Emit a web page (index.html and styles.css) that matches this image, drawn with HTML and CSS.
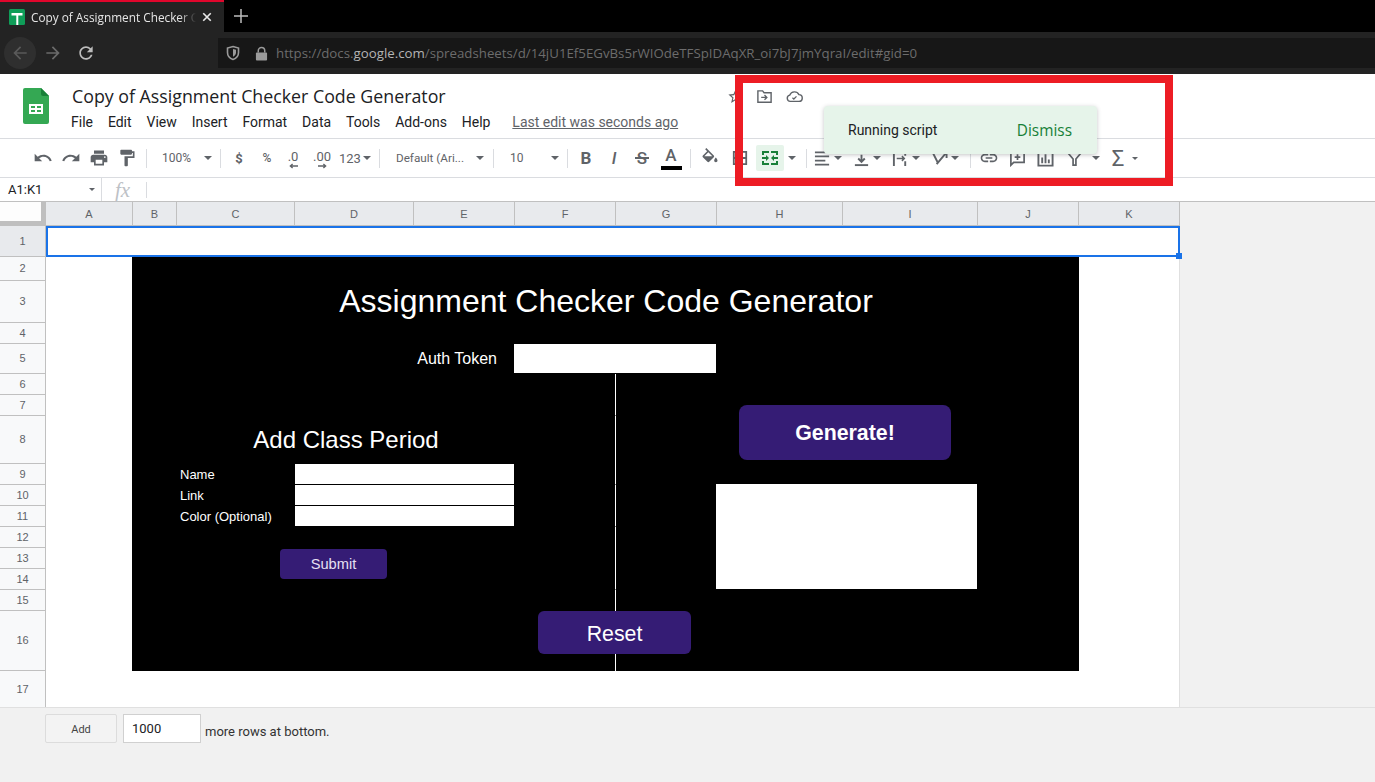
FILE: index.html
```html
<!DOCTYPE html>
<html><head><title>Copy of Assignment Checker Code Generator</title><meta charset="utf-8">
<link rel="stylesheet" href="styles.css">
</head>
<body>
<div class="page">
    <!-- browser -->
    <div class="tabbar">
        <div class="tab">
            <svg class="favicon" viewBox="0 0 16 16"><rect width="16" height="16" rx="1.500" fill="#0f9d58"/><path d="M2.500 4h11v2.500H9.300V16H7.300V6.500H2.500z" fill="#fff"/></svg>
            <span class="tab-title">Copy of Assignment Checker C</span>
            <svg class="tab-close" viewBox="0 0 12 12"><path d="M1.500 1.500l9 9M10.500 1.500l-9 9" stroke="#e8e8e8" stroke-width="2"/></svg>
        </div>
        <svg class="tab-new" viewBox="0 0 14 14"><path d="M7 0v14M0 7h14" stroke="#bdbdbd" stroke-width="1.500"/></svg>
    </div>
    <div class="navbar">
        <div class="nav-back"><svg viewBox="0 0 24 24"><path fill="#5a5a5a" d="M20 11H7.830l5.590-5.590L12 4l-8 8 8 8 1.410-1.410L7.830 13H20v-2z"/></svg></div>
        <svg class="nav-icon" viewBox="0 0 24 24"><path fill="#6b6b6b" d="M12 4l-1.410 1.410L16.170 11H4v2h12.170l-5.580 5.590L12 20l8-8z"/></svg>
        <svg class="nav-icon" viewBox="0 0 24 24"><path fill="#bdbdbd" d="M17.650 6.350C16.200 4.900 14.210 4 12 4c-4.420 0-7.990 3.580-7.990 8s3.570 8 7.990 8c3.730 0 6.840-2.550 7.730-6h-2.080c-.82 2.330-3.040 4-5.650 4-3.310 0-6-2.690-6-6s2.690-6 6-6c1.660 0 3.140.69 4.220 1.780L13 11h7V4l-2.350 2.350z"/></svg>
        <div class="urlbar">
            <svg class="shield" viewBox="0 0 16 16"><path d="M8 1.500l5.500 1.500v4.500c0 3.500-2.500 6-5.500 7-3-1-5.500-3.500-5.500-7V3z" fill="none" stroke="#9a9a9a" stroke-width="1.600"/><path d="M8 4l3 .8v3c0 1.800-1.300 3.200-3 3.900z" fill="#9a9a9a"/></svg>
            <svg class="lock" viewBox="0 0 14 16"><path d="M3.500 7V5a3.500 3.500 0 0 1 7 0v2" fill="none" stroke="#9a9a9a" stroke-width="1.600"/><rect x="1" y="7" width="12" height="8.500" rx="1" fill="#9a9a9a"/></svg>
            <span class="url">https://docs.<b>google.com</b>/spreadsheets/d/14jU1Ef5EGvBs5rWIOdeTFSpIDAqXR_oi7bJ7jmYqraI/edit#gid=0</span>
        </div>
    </div>

    <!-- doc header -->
    <div class="dochead">
        <svg class="logo" viewBox="0 0 26 36"><path d="M2 0h16l8 8v26a2 2 0 0 1-2 2H2a2 2 0 0 1-2-2V2a2 2 0 0 1 2-2z" fill="#34a853"/><path d="M18 0l8 8h-6a2 2 0 0 1-2-2z" fill="#188038"/><path d="M6 16h14v10H6z" fill="#fff"/><path d="M8 18h4v2H8zM14 18h4v2h-4zM8 22h4v2H8zM14 22h4v2h-4z" fill="#34a853"/></svg>
        <div class="docmain">
            <div class="titlerow">
                <div class="doctitle">Copy of Assignment Checker Code Generator</div>
                <svg class="ico18" viewBox="0 0 24 24"><path fill="#5f6368" d="M22 9.240l-7.190-.62L12 2 9.190 8.630 2 9.240l5.460 4.730L5.820 21 12 17.270 18.180 21l-1.630-7.030L22 9.240zM12 15.400l-3.760 2.270 1-4.280-3.320-2.880 4.380-.38L12 6.100l1.710 4.040 4.380.38-3.320 2.880 1 4.280L12 15.400z"/></svg>
                <svg class="ico18 folder" viewBox="0 0 18 18"><path d="M2 3h5l1.500 2H16v10H2z" fill="none" stroke="#5f6368" stroke-width="1.500"/><path d="M5.500 10h6M9 7.500l2.500 2.500L9 12.500" fill="none" stroke="#5f6368" stroke-width="1.400"/></svg>
                <svg class="ico18 cloud" viewBox="0 0 18 18"><path d="M4.500 14.200a3.400 3.400 0 0 1-.5-6.700A5.300 5.300 0 0 1 13.700 7a3.600 3.600 0 0 1-.2 7.200z" fill="none" stroke="#5f6368" stroke-width="1.500"/><path d="M6.800 10.400l1.500 1.300 2.800-2.800" fill="none" stroke="#5f6368" stroke-width="1.300"/></svg>
            </div>
            <div class="menubar">
                <span>File</span><span>Edit</span><span>View</span><span>Insert</span><span>Format</span><span>Data</span><span>Tools</span><span>Add-ons</span><span>Help</span>
                <span class="lastedit">Last edit was seconds ago</span>
            </div>
        </div>
    </div>

    <!-- toolbar -->
    <div class="toolbar">
        <div class="tb"><svg viewBox="0 0 24 24"><path d="M12.500 8c-2.650 0-5.050.99-6.900 2.600L2 7v9h9l-3.620-3.620c1.390-1.160 3.160-1.880 5.120-1.880 3.540 0 6.550 2.310 7.600 5.500l2.370-.78C21.080 11.030 17.150 8 12.500 8z"/></svg></div>
        <div class="tb"><svg viewBox="0 0 24 24"><path d="M18.400 10.600C16.550 8.990 14.150 8 11.500 8c-4.650 0-8.580 3.030-9.960 7.220L3.900 16c1.050-3.190 4.050-5.500 7.600-5.500 1.950 0 3.730.72 5.120 1.880L13 16h9V7l-3.600 3.600z"/></svg></div>
        <div class="tb"><svg viewBox="0 0 24 24"><path d="M19 8H5c-1.660 0-3 1.340-3 3v6h4v4h12v-4h4v-6c0-1.660-1.340-3-3-3zm-3 11H8v-5h8v5zm3-7c-.55 0-1-.45-1-1s.45-1 1-1 1 .45 1 1-.45 1-1 1zm-1-9H6v4h12V3z"/></svg></div>
        <div class="tb"><svg viewBox="0 0 24 24"><path d="M18 4V3c0-.55-.45-1-1-1H5c-.55 0-1 .45-1 1v4c0 .55.45 1 1 1h12c.55 0 1-.45 1-1V6h1v4H9v11c0 .55.45 1 1 1h2c.55 0 1-.45 1-1v-9h8V4h-3z"/></svg></div>
        <i class="sep sep-a"></i>
        <div class="sel sel-zoom"><span>100%</span><i class="caret"></i></div>
        <i class="sep"></i>
        <div class="tb tb-money txt">$</div>
        <div class="tb txt pct">%</div>
        <div class="tb dec1"><span>.0</span><svg viewBox="0 0 10 6"><path d="M10 3H2M4 .8L1.500 3 4 5.200" fill="none" stroke="#5f6368" stroke-width="1.500"/></svg></div>
        <div class="tb dec2"><span>.00</span><svg viewBox="0 0 10 6"><path d="M0 3h8M6 .8L8.500 3 6 5.200" fill="none" stroke="#5f6368" stroke-width="1.500"/></svg></div>
        <div class="sel sel-num"><span>123</span><i class="caret"></i></div>
        <i class="sep"></i>
        <div class="sel sel-font"><span>Default (Ari...</span><i class="caret"></i></div>
        <i class="sep"></i>
        <div class="sel sel-size"><span>10</span><i class="caret"></i></div>
        <i class="sep"></i>
        <div class="tb glyph bold">B</div>
        <div class="tb glyph ital">I</div>
        <div class="tb glyph strike">S</div>
        <div class="tb glyph color">A<i class="colorbar"></i></div>
        <i class="sep sep-b"></i>
        <div class="tb"><svg viewBox="0 0 24 24"><path d="M16.560 8.940L7.620 0 6.210 1.410l2.380 2.380-5.150 5.150c-.59.59-.59 1.540 0 2.120l5.500 5.500c.29.29.68.44 1.060.44s.77-.15 1.060-.44l5.500-5.500c.59-.58.59-1.530 0-2.120zM5.210 10L10 5.210 14.790 10H5.210zM19 11.500s-2 2.170-2 3.500c0 1.100.9 2 2 2s2-.9 2-2c0-1.330-2-3.500-2-3.500z"/></svg></div>
        <div class="tb tb-borders"><svg viewBox="0 0 18 18"><path d="M2 2h14v14H2zM9 2v14M2 9h14" fill="none" stroke="#5f6368" stroke-width="2"/></svg></div>
        <div class="tb merge"><svg viewBox="0 0 16 14"><path d="M0 0h7v2H2v2H0zM9 0h7v4h-2V2H9zM0 10h2v2h5v2H0zM14 10h2v4H9v-2h5zM0 6h4V4l3 3-3 3V8H0zM16 6h-4V4L9 7l3 3V8h4z" fill="#188038"/></svg></div>
        <div class="arrowbox"><i class="caret"></i></div>
        <i class="sep sep-c"></i>
        <div class="pair"><svg viewBox="0 0 18 18"><path d="M1 2.500h11M1 6.800h15M1 11.200h11M1 15.500h15" stroke="#5f6368" stroke-width="2"/></svg><i class="caret"></i></div>
        <div class="pair"><svg viewBox="0 0 18 18"><path d="M2 16h14" stroke="#5f6368" stroke-width="2"/><path d="M9 5v7M5.500 9L9 12.500 12.500 9" fill="none" stroke="#5f6368" stroke-width="2"/></svg><i class="caret"></i></div>
        <div class="pair"><svg viewBox="0 0 18 18"><path d="M2 1v16M14 1v5M14 12v5" stroke="#5f6368" stroke-width="2"/><path d="M5 9h8M10.500 6.500L13 9l-2.500 2.500" fill="none" stroke="#5f6368" stroke-width="1.600"/></svg><i class="caret"></i></div>
        <div class="pair"><svg viewBox="0 0 18 18"><path d="M1 3h8M2 3l5 10" stroke="#5f6368" stroke-width="2" fill="none"/><path d="M6 15L16 3M11 3h5.500v5.500" stroke="#5f6368" stroke-width="2" fill="none"/></svg><i class="caret"></i></div>
        <i class="sep sep-d"></i>
        <div class="tb"><svg viewBox="0 0 24 24"><path d="M3.900 12c0-1.710 1.390-3.100 3.100-3.100h4V7H7c-2.760 0-5 2.240-5 5s2.240 5 5 5h4v-1.900H7c-1.710 0-3.100-1.390-3.100-3.100zM8 13h8v-2H8v2zm9-6h-4v1.900h4c1.710 0 3.100 1.390 3.100 3.100s-1.390 3.100-3.100 3.100h-4V17h4c2.760 0 5-2.240 5-5s-2.240-5-5-5z"/></svg></div>
        <div class="tb"><svg class="s18" viewBox="0 0 18 18"><path d="M2 2h14v11H5l-3 3zM9 4.500v6M6 7.500h6" fill="none" stroke="#5f6368" stroke-width="1.800"/></svg></div>
        <div class="tb"><svg class="s18" viewBox="0 0 18 18"><path d="M1.500 1.500h15v15h-15z" fill="none" stroke="#5f6368" stroke-width="2"/><path d="M5.500 8v6M9 4.500V14M12.500 10v4" stroke="#5f6368" stroke-width="2"/></svg></div>
        <div class="tb tb-filter"><svg class="s18" viewBox="0 0 18 18"><path d="M2 3h14l-5.500 6.500V16h-3V9.500z" fill="none" stroke="#5f6368" stroke-width="1.800"/></svg></div>
        <div class="arrowbox"><i class="caret"></i></div>
        <div class="tb glyph sigma">Σ</div>
        <i class="caret caret-small"></i>
    </div>

    <!-- formula bar -->
    <div class="formulabar">
        <div class="namebox"><span>A1:K1</span><i class="caret caret-small"></i></div>
        <div class="fx">fx</div>
    </div>

    <!-- sheet -->
    <div class="sheet">
        <div class="corner"></div>
        <div class="colhead">A</div><div class="colhead">B</div><div class="colhead">C</div><div class="colhead">D</div><div class="colhead">E</div><div class="colhead">F</div><div class="colhead">G</div><div class="colhead">H</div><div class="colhead">I</div><div class="colhead">J</div><div class="colhead">K</div>
        <div class="rowhead sel-row">1</div>
        <div class="rowhead">2</div><div class="rowhead">3</div><div class="rowhead">4</div><div class="rowhead">5</div><div class="rowhead">6</div><div class="rowhead">7</div><div class="rowhead">8</div><div class="rowhead">9</div><div class="rowhead">10</div><div class="rowhead">11</div><div class="rowhead">12</div><div class="rowhead">13</div><div class="rowhead">14</div><div class="rowhead">15</div><div class="rowhead">16</div><div class="rowhead">17</div>

        <div class="selection"><i class="handle"></i></div>
        <div class="blackout"></div>
        <div class="sheet-title">Assignment Checker Code Generator</div>
        <div class="auth-label">Auth Token</div>
        <div class="auth-input"></div>
        <div class="divider d1"></div><div class="divider d2"></div><div class="divider d3"></div><div class="divider d4"></div><div class="divider d5"></div>
        <div class="add-title">Add Class Period</div>
        <div class="flabel fr9">Name</div><div class="finput fr9"></div>
        <div class="flabel fr10">Link</div><div class="finput fr10"></div>
        <div class="flabel fr11">Color (Optional)</div><div class="finput fr11"></div>
        <div class="btn btn-submit">Submit</div>
        <div class="btn btn-generate">Generate!</div>
        <div class="output"></div>
        <div class="btn btn-reset">Reset</div>
    </div>

    <!-- footer -->
    <div class="addrows">
        <div class="addbtn">Add</div>
        <div class="addinput">1000</div>
        <span class="addtext">more rows at bottom.</span>
    </div>

    <!-- floats -->
    <div class="toast"><span>Running script</span><span class="dismiss">Dismiss</span></div>
    <div class="redbox"></div>
</div>
</body>
</html>
```
FILE: styles.css
```css
html, body {margin: 0; padding: 0; background: #f1f1f1;}
.page {position: relative; width: 1375px; height: 782px; overflow: hidden; display: flex; flex-direction: column; font-family: "Liberation Sans", sans-serif;}
i {display: block; font-style: normal;}

/* browser */
.tabbar {height: 32px; background: #000; display: flex; align-items: center;}
.tab {width: 224px; height: 32px; box-sizing: border-box; background: #232323; border-top: 2px solid #e0062c; display: flex; align-items: center; padding-left: 9px;}
.favicon {width: 16px; height: 16px; flex: none; margin-right: 6px;}
.tab-title {width: 165px; flex: none; white-space: nowrap; font: 11.800px "Open Sans", sans-serif; color: #e6e6e6; -webkit-mask-image: linear-gradient(to right, #000 90%, transparent 100%); mask-image: linear-gradient(to right, #000 90%, transparent 100%);}
.tab-close {width: 10px; height: 10px; margin-left: 6px;}
.tab-new {width: 14px; height: 14px; margin-left: 10px;}
.navbar {height: 42px; background: #232323; display: flex; align-items: flex-start; padding-top: 5px; box-sizing: border-box;}
.nav-back {width: 32px; height: 32px; border-radius: 50%; background: #2f2f2f; margin-left: 4px; display: flex; align-items: center; justify-content: center;}
.nav-back svg {width: 20px; height: 20px;}
.nav-icon {width: 20px; height: 20px; margin: 6px 0 0 7px;}
.nav-icon + .nav-icon {margin-left: 13px;}
.urlbar {margin: 1px 0 0 122px; flex: 1; height: 30px; background: #171717; display: flex; align-items: center;}
.shield {width: 16px; height: 16px; margin-left: 7px;}
.lock {width: 13px; height: 15px; margin-left: 14px;}
.url {margin-left: 8px; font: 13.270px "Open Sans", sans-serif; color: #6c6c6c; white-space: nowrap;}
.url b {font-weight: 400; color: #b4b4b4;}

/* doc header */
.dochead {height: 65px; box-sizing: border-box; background: #fff; border-bottom: 1px solid #dadce0; display: flex;}
.logo {width: 26px; height: 36px; margin: 14px 23px 0 23px; flex: none;}
.docmain {flex: 1;}
.titlerow {display: flex; align-items: center; height: 24px; margin-top: 10px;}
.doctitle {width: 655px; flex: none; font: 17.800px "Open Sans", sans-serif; color: #202124;}
.ico18 {width: 17px; height: 17px; flex: none;}
.folder {margin-left: 12px;}
.cloud {margin-left: 13px;}
.menubar {display: flex; margin-top: 4px; font: 14px Roboto, sans-serif; color: #202124; line-height: 20px; margin-left: -1px;}
.menubar span {margin-right: 14.900px;}
.menubar .lastedit {margin-left: 7px; color: #5f6368; text-decoration: underline;}

/* toolbar */
.toolbar {height: 39px; box-sizing: border-box; background: #fff; border-bottom: 1px solid #dadce0; display: flex; align-items: center; padding-left: 29px; color: #5f6368;}
.tb {width: 28px; height: 26px; flex: none; display: flex; align-items: center; justify-content: center; position: relative;}
.tb svg {width: 20px; height: 20px; fill: #5f6368;}
.tb svg.s18 {width: 17px; height: 17px;}
.sep {width: 1px; height: 19px; background: #dadce0; flex: none;}
.sep-a {margin-left: 5px;}
.sep-b {margin: 0 5px;}
.sep-c {margin: 0 7px 0 6px;}
.sep-d {margin: 0 4px 0 0;}
.caret {width: 0; height: 0; border-left: 4px solid transparent; border-right: 4px solid transparent; border-top: 4px solid #5f6368; flex: none;}
.caret-small {border-left-width: 3px; border-right-width: 3px; border-top-width: 3px;}
.sel {display: flex; align-items: center; justify-content: space-between; height: 26px; box-sizing: border-box; font: 12px Roboto, sans-serif; flex: none;}
.sel-zoom {width: 73px; padding: 0 8px 0 15px;}
.sel-num {width: 40px; justify-content: flex-start; font-size: 13px; gap: 2px;}
.sel-font {width: 113px; padding: 0 9px 0 16px; font-size: 11.700px;}
.sel-size {width: 73px; padding: 0 8px 0 16px;}
.txt {font: bold 13px Roboto, sans-serif; width: 28px;}
.tb-money {margin-left: 4px;}
.pct {font-weight: 500; font-size: 12px;}
.dec1, .dec2 {flex-direction: column; font: 13px Roboto, sans-serif; line-height: 11px;}
.dec1 {width: 24px;}
.dec2 {width: 34px;}
.dec1 svg, .dec2 svg {width: 9px; height: 6px; margin-top: 1px; margin-bottom: -3px;}
.glyph {font-size: 17px; font-family: Roboto, sans-serif;}
.bold {font-weight: 700; margin-left: 4px;}
.ital {font-style: italic; font-weight: 500;}
.strike {font-weight: 500;}
.strike::after {content: ""; position: absolute; left: 7px; top: 12px; width: 14px; height: 2px; background: #5f6368;}
.color {margin-left: 1px; font-weight: 500; padding-bottom: 6px; box-sizing: border-box;}
.colorbar {position: absolute; left: 4px; bottom: 1px; width: 21px; height: 4px; background: #000;}
.tb-borders {margin-left: 2px;}
.tb-borders svg {width: 16px; height: 16px;}
.merge {margin-left: 2px; background: #e6f4ea; border-radius: 2px;}
.merge svg {width: 16px; height: 14px;}
.arrowbox {width: 16px; height: 26px; display: flex; align-items: center; justify-content: center; flex: none;}
.pair {width: 39px; flex: none; display: flex; align-items: center; gap: 3px;}
.pair svg {width: 17px; height: 17px; flex: none;}
.tb-filter {margin-left: 1px;}
.sigma {font-size: 22px; font-weight: 400;}

/* formula bar */
.formulabar {height: 24px; box-sizing: border-box; background: #fff; border-bottom: 1px solid #c0c0c0; display: flex; align-items: center;}
.namebox {width: 102px; height: 23px; box-sizing: border-box; border-right: 1px solid #dadce0; display: flex; align-items: center; justify-content: space-between; padding: 0 6px 0 8px; font: 13px Roboto, sans-serif; color: #202124;}
.fx {width: 45px; height: 16px; box-sizing: border-box; border-right: 1px solid #dadce0; font: italic 21px/16px "Liberation Serif", serif; color: #bdc1c6; padding-left: 13px;}

/* sheet */
.sheet {display: grid; width: 1180px; background: #fff; font-size: 11px; box-shadow: inset -1px 0 0 #e0e0e0;
    grid-template-columns: 46px 87px 44px 118px 119px 101px 101px 101px 126px 135px 101px 101px;
    grid-template-rows: 24px 31px 24px 42px 21px 30px 21px 21px 48px 21px 21px 21px 21px 21px 21px 21px 60px 37px;}
.corner {background: #fdfdfd; border-right: 5px solid #bfbfbf; border-bottom: 5px solid #bfbfbf;}
.colhead {background: #e8eaed; border-right: 1px solid #c0c0c0; border-bottom: 1px solid #c0c0c0; color: #5f6368; display: flex; align-items: center; justify-content: center;}
.rowhead {grid-column: 1; background: #f8f9fa; border-right: 1px solid #c0c0c0; border-bottom: 1px solid #c0c0c0; color: #5f6368; display: flex; align-items: center; justify-content: center; font-size: 11px; padding-bottom: 1px; box-sizing: border-box;}
.sel-row {background: #e8eaed;}
.selection {grid-column: 2 / 13; grid-row: 2; border: 2px solid #1a73e8; position: relative; z-index: 3; box-sizing: border-box; height: 31px;}
.handle {position: absolute; right: -4px; bottom: -4px; width: 6px; height: 6px; background: #1a73e8;}
.blackout {grid-column: 2 / 12; grid-row: 3 / 18; background: #000; margin-left: 86px;}
.sheet-title {grid-column: 3 / 12; grid-row: 4; color: #fff; font-size: 32px; display: flex; align-items: center; justify-content: center; padding-bottom: 2px;}
.auth-label {grid-column: 4 / 7; grid-row: 6; color: #fff; font-size: 16px; display: flex; align-items: center; justify-content: flex-end; padding-right: 18px; margin-top: -1px;}
.auth-input {grid-column: 7 / 9; grid-row: 6; background: #fff; margin: 0 1px 1px -1px;}
.divider {grid-column: 7; border-right: 1px solid #fff; border-bottom: 1px solid #000;}
.d1 {grid-row: 7 / 9;}
.d2 {grid-row: 9 / 11;}
.d3 {grid-row: 11 / 13;}
.d4 {grid-row: 13 / 16;}
.d5 {grid-row: 16 / 18; border-bottom: 0;}
.add-title {grid-column: 4 / 7; grid-row: 9; color: #fff; font-size: 24px; display: flex; align-items: center; justify-content: center;}
.flabel {grid-column: 4; color: #fff; font-size: 13px; display: flex; align-items: center; padding-left: 3px;}
.finput {grid-column: 5 / 7; background: #fff; margin: 0 1px 1px 0;}
.fr9 {grid-row: 10;}
.fr10 {grid-row: 11;}
.fr11 {grid-row: 12;}
.btn {background: #351c75; color: #fff; display: flex; align-items: center; justify-content: center; z-index: 2; box-sizing: border-box;}
.btn-submit {grid-column: 4 / 6; grid-row: 14 / 16; justify-self: start; align-self: start; width: 107px; height: 30px; margin: 1px 0 0 103px; border-radius: 4px; font-size: 14.670px; color: #e6e0f3;}
.btn-generate {grid-column: 9 / 11; grid-row: 8 / 10; justify-self: start; align-self: start; width: 212px; height: 55px; margin: 10px 0 0 22px; border-radius: 8px; font-size: 21.330px; font-weight: bold; padding-top: 2px;}
.output {grid-column: 9 / 11; grid-row: 11 / 16; background: #fff; margin: -1px 1px 1px -1px;}
.btn-reset {grid-column: 7 / 10; grid-row: 17; justify-self: start; align-self: start; width: 153px; height: 43px; margin-left: 23px; border-radius: 6px; font-size: 21.330px; padding-top: 3px;}

/* footer */
.addrows {flex: 1; display: flex; align-items: flex-start; padding: 6px 0 0 45px; margin-top: -1px; border-top: 1px solid #e0e0e0; background: #f1f1f1; position: relative;}
.addbtn {width: 72px; height: 29px; box-sizing: border-box; border: 1px solid #dcdcdc; border-radius: 2px; background: #f3f3f3; color: #444; font: 11px/29px Roboto, sans-serif; text-align: center;}
.addinput {width: 78px; height: 29px; box-sizing: border-box; border: 1px solid #d0d0d0; background: #fff; margin-left: 6px; padding-left: 8px; font: 13px/27px Roboto, sans-serif; color: #202124;}
.addtext {margin: 10px 0 0 4px; font: 13px/16px Roboto, sans-serif; color: #333;}

/* floats */
.toast {position: absolute; left: 824px; top: 106px; width: 273px; height: 48px; box-sizing: border-box; padding: 0 25px 0 24px; background: #e6f4ea; border-radius: 4px; box-shadow: 0 1px 4px rgba(60,64,67,.3); display: flex; align-items: center; justify-content: space-between; font: 14px Roboto, sans-serif; color: #202124; z-index: 5;}
.dismiss {font: 15.400px "Open Sans", sans-serif; color: #188038;}
.redbox {position: absolute; left: 735px; top: 75px; width: 438px; height: 111px; box-sizing: border-box; border: 8px solid #ed1c24; z-index: 6;}
```
